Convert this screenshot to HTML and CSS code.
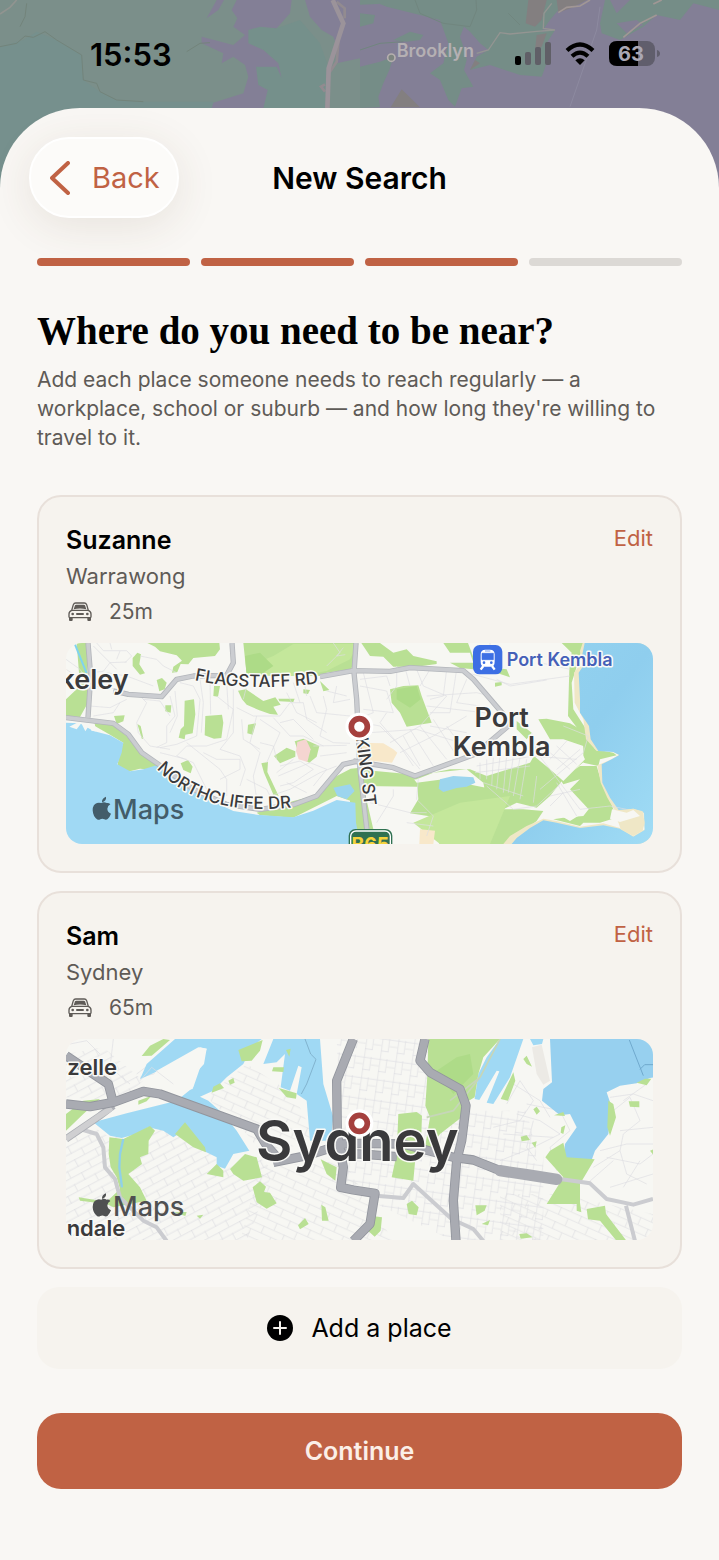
FILE: index.html
```html
<!DOCTYPE html>
<html lang="en">
<head>
  <meta charset="UTF-8" />
  <meta name="viewport" content="width=device-width, initial-scale=1.0"/>
  <title>New Search</title>
  <link rel="stylesheet" href="styles.css">
</head>

<body>
  <!-- dimmed map behind the sheet -->
  <svg class="backdrop" viewBox="0 0 2157 624" preserveAspectRatio="xMidYMin slice" aria-hidden="true">
    <rect width="2157" height="624" fill="#7b8f8a"/>
    <path d="M0 140 70 120 110 95 170 120 245 165 250 240 300 275 350 300 430 305 H640 V624H0Z" fill="#76908d"/>
    <path d="M745 90 780 80 830 85 900 60 960 130 985 200 975 324H790L803 270 775 255 768 200 830 200 845 235 835 190 790 150 745 130Z" fill="#75908b"/>
    <path class="bay" d="M650 0 620 55 655 30 672 0ZM710 0 695 30 712 55 700 80 735 105 700 135 605 110 605 130 670 160 665 190 700 170 735 195 745 230 730 280 640 308 635 325H790L803 270 775 255 768 200 830 200 845 235 835 190 790 150 745 130 745 90 780 80 830 85 870 40 875 0ZM915 0 930 50 965 90 1000 110 1015 150 1010 190 1080 175V0Z"/>
    <g transform="translate(1080)">
      <path class="bay" d="M0 0H1077V624H800V324H0Z"/>
      <path class="hills" d="M0 0H70L55 12 0 14ZM0 40 45 45 40 70 0 80ZM80 20 30 0H620L570 60 545 95 585 90 560 130 560 190 545 230 480 225 390 195 330 210 350 170 385 150 360 130 330 95 312 80 300 110 310 140 320 180 312 210 340 260 305 265 285 320 265 300 240 240 210 220 250 190 265 130 240 60 180 45ZM100 120 150 95 190 105 180 120 140 125ZM0 200 60 185 100 170 88 210 70 250 55 290 60 322 0 324Z"/>
      <path class="hills" d="M735 0 720 70 725 100 780 120 850 80 890 45 960 60 1000 10 1077 30V0Z"/>
      <path d="M750 0 770 40 810 0ZM770 70 830 60 850 75 800 100Z" fill="#837f95"/>
      <path d="M505 0H560L545 60 525 80 497 70ZM92 322 125 268 180 322ZM590 0H680L640 22 595 38ZM530 105 560 100 545 140 525 150ZM330 210 345 180 360 190Z" fill="#837f80"/>
      <path d="M595 38 620 22 660 18 690 0M790 112 840 70 890 45M880 12 905 0" fill="none" stroke="#a19795" stroke-width="5"/>
      <path d="M350 160 385 150 420 98 450 102 530 94 585 90 550 85 552 40 575 10" fill="none" stroke="#949592" stroke-width="4"/>
      <path d="M165 0 180 40 250 70 330 80 350 30 348 0M445 40 480 75M0 150 60 130 130 125" fill="none" stroke="#71867f" stroke-width="3"/>
      <path d="M720 20 710 90 630 320" fill="none" stroke="#8d8aa0" stroke-width="3"/>
      <circle cx="94" cy="173" r="11" fill="#7d8580" stroke="#b5afae" stroke-width="5"/>
      <text class="town" x="110" y="172">Brooklyn</text>
    </g>
    <path d="M0 140 50 130 75 108 100 112 135 95 170 120 245 165 250 240 290 250 300 275 350 300 430 305M60 80 75 50 80 10M560 155 600 130 630 128" fill="none" stroke="#73847b" stroke-width="3"/>
    <path d="M0 42 30 22 50 0" fill="none" stroke="#919490" stroke-width="5"/>
    <path d="M975 275 963 260 975 253M1010 5 1034 25 1034 55M1016 120 1010 185 990 215" fill="none" stroke="#928b90" stroke-width="8"/>
    <path d="M998 0 1030 70 986 205 982 330" fill="none" stroke="#9b939a" stroke-width="14"/>
  </svg>

  <header class="status">
    <span class="time">15:53</span>
    <div class="status-icons">
      <svg width="36" height="24" viewBox="0 0 36 24" aria-label="Signal">
        <rect x="0" y="14" width="6" height="9" rx="2"/>
        <g fill="#605f67"><rect x="10" y="10" width="6" height="13" rx="2"/><rect x="20" y="5" width="6" height="18" rx="2"/><rect x="30" y="0" width="6" height="23" rx="2"/></g>
      </svg>
      <svg width="30" height="24" viewBox="0 0 30 24" aria-label="Wi-Fi">
        <path d="M2 8.500Q15-3.500 28 8.500M7 14.300Q15 7 23 14.300" fill="none" stroke="#000" stroke-width="4.200"/>
        <path d="M15 23 10.300 18.300Q15 14 19.700 18.300Z"/>
      </svg>
      <svg width="51" height="26" viewBox="0 0 51 26" aria-label="Battery">
        <rect x="0" y="0" width="46" height="25" rx="8" fill="#605e6c"/>
        <path d="M8 0H29V25H8Q0 25 0 17V8Q0 0 8 0Z"/>
        <path d="M48 9Q51 10 51 12.500T48 16Z" fill="#605e6c"/>
        <text class="charge" x="22" y="20">63</text>
      </svg>
    </div>
  </header>

  <main class="sheet">
    <div class="nav">
      <button class="back" type="button">
        <svg width="20" height="34" viewBox="0 0 20 34" aria-hidden="true"><path d="M18 2 2 17 18 32" fill="none" stroke="currentColor" stroke-width="4" stroke-linecap="round" stroke-linejoin="round"/></svg>
        Back
      </button>
      <h1>New Search</h1>
    </div>

    <div class="progress" role="progressbar" aria-valuenow="3" aria-valuemin="0" aria-valuemax="4" aria-label="Step">
      <span class="step done"></span>
      <span class="step done"></span>
      <span class="step done"></span>
      <span class="step"></span>
    </div>

    <h2>Where do you need to be near?</h2>
    <p class="intro">Add each place someone needs to reach regularly — a workplace, school or suburb — and how long they're willing to travel to it.</p>

    <section class="card">
      <div class="card-top">
        <h3>Suzanne</h3>
        <button class="edit" type="button">Edit</button>
      </div>
      <p class="place">Warrawong</p>
      <p class="travel">
        <svg class="car" viewBox="0 0 72 58" aria-label="By car"><use href="#car"/></svg>
        25m
      </p>

      <!-- Warrawong map -->
      <svg class="map" viewBox="18 21 1761 603" role="img" aria-label="Map of Warrawong">
        <defs>
          <g id="car">
            <path d="M11 25 16 8Q18 3 23 3H49Q54 3 56 8L61 25M11 25Q3 28 3 36V44Q3 47 7 47H65Q69 47 69 44V36Q69 28 61 25Z" fill="none" stroke="#5f5b57" stroke-width="4"/>
            <path d="M17 22 21 10Q22 8 25 8H47Q50 8 51 10L55 22Q36 17 17 22ZM3 46H14V54Q14 57 11 57H6Q3 57 3 54ZM58 46H69V54Q69 57 66 57H61Q58 57 58 54ZM27 33H45Q48 33 48 36T45 39H27Q24 39 24 36T27 33Z" fill="#5f5b57"/>
            <circle cx="14" cy="36" r="4" fill="#5f5b57"/><circle cx="58" cy="36" r="4" fill="#5f5b57"/>
          </g>
          <g id="pin">
            <circle r="42" fill="#fff"/>
            <circle r="24" fill="#fff" stroke="#a5403e" stroke-width="17"/>
          </g>
          <g id="apple">
            <path d="M42 16Q34 11 26 16 18 14 13 16 0 20 0 38 1 56 13 65 18 68 23 65 29 62 35 65 40 68 45 64 52 57 55 48 44 43 44 33 45 24 53 20 49 15 42 16ZM28 14Q27 2 40-3 42 10 28 14Z"/>
            <text class="maps-word" x="61" y="64">Maps</text>
          </g>
          <linearGradient id="sea" x1="0" y1="0" x2="1" y2="1"><stop offset="0" stop-color="#94d3ef"/><stop offset=".5" stop-color="#8fceee"/><stop offset="1" stop-color="#a0dcf5"/></linearGradient>
        </defs>

        <rect x="18" y="21" width="1761" height="603" fill="#f7f7f3"/>
        <g class="park">
          <path d="M50 21H85L82 120 84 200 60 243 18 240V190L60 150Z"/>
          <path d="M262 21H478L480 40 465 60 400 66 385 85 362 84 352 108 336 110 340 92 366 74 350 58 300 46 285 32Z"/>
          <path d="M550 21H895L885 80 872 100 800 110 780 120 560 118Z"/>
          <path d="M232 50 243 55 238 85 255 112 240 116 218 90 218 66ZM290 132 306 126 320 140 314 160 298 166ZM374 194 402 190 406 235 398 292 376 296 374 310 356 305 362 280 372 270ZM436 240 486 236 490 260 484 306 462 308 434 298ZM534 164 558 160 610 195 646 184 662 206 640 212 654 236 630 234 596 222 560 206 546 190ZM564 266 588 262 578 296 562 292ZM316 208 334 208 332 230 316 226ZM162 240 194 238 190 256 170 264ZM462 150 480 150 474 182 460 180ZM232 264 242 270 250 306 246 310ZM642 360 680 335 706 346 706 362 660 382ZM704 316 730 308 778 330 770 362 748 380 720 366ZM362 382 384 372 398 392 392 412 370 402ZM604 382 624 378 622 408 656 480 646 490 612 410ZM730 160 750 162 744 174 730 172ZM780 135 808 162 790 166ZM655 188 704 188 700 198 658 196Z"/>
          <path d="M90 262 150 262 200 300 260 365 300 385 285 402 240 398 200 408 172 395 178 350 190 320 150 296Z"/>
          <path d="M590 530 700 495 770 478 830 420 872 398 900 395 920 450 900 624 888 624 888 500 830 480 700 545 600 538Z"/>
        </g>
        <g class="park" transform="translate(870)">
          <path d="M34 21 60 60 100 62 130 92 200 92 260 84 260 76 190 60 170 40 130 50 90 21ZM280 21 300 50 360 50 370 80 300 80 330 96 420 104 480 124 470 100 380 90 354 21ZM120 160 160 150 205 148 215 180 245 260 170 272 150 230 125 200ZM565 250 590 248 660 262 700 285 715 320 720 360 690 380 640 430 600 480 560 515 500 500 460 520 410 490 400 440 350 400 250 410 200 430 60 450 0 440V400L120 410 200 420 300 400 360 400 410 420 540 380 552 360 600 400 640 430 710 370 700 330 640 310 600 310ZM435 140 455 138 455 148 435 152ZM500 255 545 290 530 310 500 280ZM20 400 180 415 200 440 280 430 430 460 430 520 520 520 580 525 560 555 500 600 480 624H268V545L180 532 205 490 202 452 40 450 70 580 40 624H0V440Z"/>
          <path d="M690 390 740 390 755 440 780 490 798 545 750 560 700 560 690 570 610 550 640 545 700 540 716 520 660 460 690 430 640 445 630 430ZM635 21H700L690 60 665 140 670 220 715 290 735 340 790 350 800 358 750 370 745 390 700 380 700 300 654 240 658 100 665 50ZM60 21 78 21 66 38Z"/>
        </g>
        <path d="M700 24H895L870 70 800 105 720 120 600 118 590 80 640 60ZM1060 560 1200 500 1350 480 1290 624 1140 624Z" fill="#c4e79b"/>
        <path d="M555 60 600 50 640 90 600 118H560ZM1010 160 1070 150 1082 190 1050 215 1010 190Z" fill="#addb87"/>
        <path d="M712 318 738 310 752 340 742 378 716 370 708 345Z" fill="#f5d5d1"/>
        <path d="M900 320 970 322 1000 340 1012 350 996 380 890 370ZM1080 580 1125 584 1120 624 1078 624Z" fill="#f8e8ca"/>
        <path d="M1140 430 1180 420 1240 424 1246 440 1220 452 1190 456 1150 468 1136 458ZM820 455 870 445 884 465 860 490 832 480Z" fill="#9cd5ee"/>

        <path class="water" d="M18 260 60 262 100 285 150 298 190 320 185 350 172 385 210 406 250 400 290 388 340 420 390 462 450 492 520 525 590 536 700 544 760 524 830 492 886 500 888 560 900 624H18Z"/>
        <path d="M28 272 50 280 64 262 76 286 90 264 94 284 108 286 104 262 60 256Z" fill="#f7f7f3"/>
        <g transform="translate(870)">
          <path d="M698 21 690 45 694 80 672 110 674 200 700 250 708 310 740 345 785 346 806 357 780 372 742 388 752 440 772 485 798 530 850 520 880 530 884 580 850 600 810 576 760 562 690 572 620 555 580 548 530 570 480 600 460 624 H900V21Z" fill="#efe7c6"/>
          <path d="M704 21 696 60 698 92 686 110 690 190 690 230 717 270 722 310 745 345 790 348 808 357 785 370 755 385 757 440 780 485 806 522 850 518 882 530 884 582 850 602 810 578 760 568 690 576 620 560 580 553 540 576 500 606 485 624 H912 V21Z" fill="url(#sea)"/>
          <path d="M790 528 850 518 878 526 884 560 878 584 850 600 812 580 806 562Z" fill="#efe7c6"/>
          <path d="M786 520 830 530 850 522 870 540 810 558 780 548Z" fill="#f7f7f3"/>
          <path d="M600 400 650 320 690 340 705 370 640 435ZM580 510 630 450 700 530 660 555Z" fill="#f7f7f3"/>
        </g>
        <path d="M45 25 80 112" stroke="#80d3ee" stroke-width="6" fill="none"/>

        <!-- minor streets -->
        <path class="street" d="M100 30 130 60 170 100M90 110 130 106 150 80 200 78M110 21 130 44 200 44 215 60 195 80M150 21 155 40M180 45 170 70M240 60 290 70 310 90 350 110M100 150 180 160 240 180 260 200 230 260 235 290 270 330 330 340M250 190 300 195 330 240M90 210 150 215 200 190M100 240 160 230 180 200M330 180 345 240 320 270 320 320 290 334M345 165 352 240 330 290M360 140 400 150 420 190 410 300 350 325 300 335M420 130 430 200 424 290M450 130 452 235M470 180 520 220 500 310 440 330 380 330 350 360M500 140 505 220M520 160 520 290 480 340 540 360 556 400 540 450M530 215 580 240 660 240 690 200M545 250 550 310 600 340M590 240 570 320 600 350 580 420 590 490M600 250 660 290 620 380M640 245 690 300 730 300 790 330M660 260 700 250 760 310M690 200 730 200 740 250 800 290M680 170 710 230 770 260M750 180 770 230 870 240M790 180 800 220 780 300 820 320 870 322M830 150 820 200 870 190M800 165 860 180M700 140 720 200M760 330 860 328M780 360 860 350M380 320 480 400 500 430 500 480M350 360 400 380 440 460M430 350 470 370 540 370 540 400 480 430M300 350 380 370M660 390 720 375 760 400 700 440 660 450M650 410 700 370M655 420 750 380 800 400 760 450M680 440 740 470M630 480 690 460 780 410 830 390M560 430 620 460 640 500M600 320 640 330 650 370M140 110 200 120 280 150M18 70 60 100 80 130M18 100 50 120M560 150 550 190M730 120 740 180M820 21 840 50 800 90M850 35 830 60 856 56"/>
        <g class="street" transform="translate(870)">
          <path d="M30 130 110 120 120 150M40 110 70 230 20 250M30 150 110 165 130 230 40 220M35 260 90 270 160 340 210 400M110 230 90 260 150 330 190 390M140 90 140 150 110 190M165 95 180 150M200 100 220 150 290 180M240 100 210 150M290 100 280 180 240 190M320 100 300 230 240 230M350 130 320 200 390 210M230 180 380 170 420 180M230 210 400 230 450 240M60 290 200 280 330 320M180 280 250 390M160 300 210 390M210 270 290 370M250 250 320 360M290 270 345 345M150 350 250 300 350 240M120 320 210 270 290 180M240 270 350 290M350 110 480 145 660 120M440 130 480 150 590 132M420 20 420 60M570 80 660 100M600 350 660 400M620 330 680 385M600 370 650 315M620 400 690 340M570 460 700 350 715 300 640 270M545 290 560 350 600 400 690 520 780 510 830 520M390 380 390 430M410 370 410 430M430 365 425 450M450 360 440 460M470 360 460 470M490 360 475 470M510 365 490 480M530 370 510 490M380 390 550 360M375 410 540 390M400 440 520 480M560 420 550 500M630 445 560 510 490 520 410 450M600 480 690 460M620 440 680 540M600 510 640 470M60 500 180 530 230 530M130 460 130 480 80 560M205 425 200 490 250 540 230 600M170 560 250 570M540 360 680 370"/>
        </g>

        <!-- main roads -->
        <g class="road-edge">
          <path d="M84 21 92 120 84 245"/><path d="M160 165 205 175 305 182 350 130 400 120 500 118 520 80 516 21"/><path d="M18 245 160 262 205 295 245 350 300 388 400 460 500 505 600 520 700 506 770 480 820 420 850 385 890 376"/><path d="M888 21 882 110 890 190 900 400 925 620"/><path d="M780 122 880 104 990 106 1050 95 1210 104 1240 130 1330 235 1345 270 1245 355 1065 420 1000 395 880 375"/>
        </g>
        <g class="road">
          <path d="M84 21 92 120 84 245"/><path d="M160 165 205 175 305 182 350 130 400 120 500 118 520 80 516 21"/><path d="M18 245 160 262 205 295 245 350 300 388 400 460 500 505 600 520 700 506 770 480 820 420 850 385 890 376"/><path d="M888 21 882 110 890 190 900 400 925 620"/><path d="M780 122 880 104 990 106 1050 95 1210 104 1240 130 1330 235 1345 270 1245 355 1065 420 1000 395 880 375"/>
        </g>

        <path id="flagstaff" d="M404 133Q590 172 820 136" fill="none"/>
        <path id="northcliffe" d="M290 398Q440 560 760 505" fill="none"/>
        <path id="king" d="M888 306Q904 420 918 550" fill="none"/>
        <text class="road-name"><textPath href="#flagstaff">FLAGSTAFF RD</textPath></text>
        <text class="road-name"><textPath href="#northcliffe">NORTHCLIFFE DR</textPath></text>
        <text class="road-name"><textPath href="#king">KING ST</textPath></text>
        <text class="suburb" x="206" y="158" text-anchor="end">keley</text>
        <text class="suburb" x="1325" y="272" text-anchor="middle">Port</text>
        <text class="suburb" x="1325" y="360" text-anchor="middle">Kembla</text>

        <rect x="1239" y="27" width="88" height="88" rx="20" fill="#3d6fe4"/>
        <path d="M1264 55Q1264 43 1276 43H1290Q1302 43 1302 55V77Q1302 90 1292 90H1274Q1264 90 1264 77Z" fill="#fff" stroke="#fff" stroke-width="4"/>
        <path d="M1266 52H1300V71H1266ZM1275 45H1291" fill="#3d6fe4" stroke="#3d6fe4" stroke-width="2"/>
        <path d="M1270 90 1262 101M1296 90 1304 101" stroke="#fff" stroke-width="7"/>
        <circle cx="1272" cy="80" r="4" fill="#3d6fe4"/><circle cx="1294" cy="80" r="4" fill="#3d6fe4"/>
        <text class="station" x="1340" y="91">Port Kembla</text>

        <rect x="866" y="579" width="131" height="90" rx="20" fill="#2f7151"/>
        <rect x="872" y="585" width="119" height="90" rx="16" fill="#2f7151" stroke="#fff" stroke-width="4"/>
        <text class="route" x="931" y="646">B65</text>
        <use href="#pin" x="898" y="272"/>
        <use class="maps-logo on-water" href="#apple" x="98" y="485"/>
      </svg>
    </section>

    <section class="card">
      <div class="card-top">
        <h3>Sam</h3>
        <button class="edit" type="button">Edit</button>
      </div>
      <p class="place">Sydney</p>
      <p class="travel">
        <svg class="car" viewBox="0 0 72 58" aria-label="By car"><use href="#car"/></svg>
        65m
      </p>

      <!-- Sydney map -->
      <svg class="map" viewBox="18 15 1761 603" role="img" aria-label="Map of Sydney">
        <defs>
          <pattern id="blocks-a" width="70" height="44" patternUnits="userSpaceOnUse" patternTransform="rotate(-28)"><path class="street" d="M0 2H70M2 0V26M36 22V44M0 24H70"/></pattern>
          <pattern id="blocks-b" width="48" height="62" patternUnits="userSpaceOnUse" patternTransform="rotate(8)"><path class="street" d="M2 0V62M22 0V40M0 4H48M0 40H24M24 24H48"/></pattern>
          <pattern id="blocks-c" width="66" height="46" patternUnits="userSpaceOnUse" patternTransform="rotate(24)"><path class="street" d="M0 2H66M2 0V24M34 24V46M0 24H66"/></pattern>
        </defs>
        <rect x="18" y="15" width="1761" height="606" fill="#f7f7f3"/>
        <path d="M18 310 100 280 150 310 250 290 380 280 490 400 600 370 640 410 560 621H18ZM18 60 130 40 250 140 180 200 18 190Z" fill="url(#blocks-a)"/>
        <path d="M830 15H1110L1100 110 1200 200V360H1450V621H1180L930 500 850 440ZM1220 230H1400L1440 400 1220 360Z" fill="url(#blocks-b)"/>
        <path d="M440 190 560 90 700 180 740 260 820 320 600 350 560 300ZM600 400 850 380 1000 621H540ZM1320 480 1500 480 1779 540V621H1320Z" fill="url(#blocks-c)"/>
        <path class="street" d="M1340 210 1380 140 1420 200 1380 260 1300 280M1360 150 1440 200 1470 250M1370 240 1440 260 1500 300 1420 340 1320 380M1400 210 1500 230 1530 290 1470 340 1490 410M1330 300 1480 310M1420 260 1400 340 1430 380M1650 190 1720 180 1779 200M1660 230 1710 190 1740 260 1690 300 1680 350M1620 350 1700 330 1779 330M1600 400 1680 350 1700 420 1760 450M1640 370 1740 390 1779 360M1690 200 1760 150M1580 450 1660 380M1680 290 1779 280M1650 460 1779 420M1740 380 1690 460M230 120 270 90 310 140M240 130 300 115 345 150 330 180M30 30 80 20 120 60M160 15 150 100 210 150"/>

        <path class="water" d="M345 15H605L575 40 550 90 500 130 460 170 420 188 445 200 490 240 530 290 568 350 520 360 495 404 470 395 470 370 430 350 380 285 340 310 310 290 265 280 230 300 185 312 150 305 100 265 200 238 350 200 400 160 440 44 420 40 350 95 300 108 240 136 260 90Z"/>
        <path class="water" d="M640 15 610 90 650 85 675 60 662 160 690 170 715 95 725 100 710 180 740 200 750 320 812 320 820 250 790 150 780 15Z"/>
        <path d="M415 40 440 44 432 90 405 120 398 165 310 185 250 165 290 110Z" fill="#f7f7f3"/>
        <path class="street" d="M240 140 275 100 340 150"/>
        <path d="M735 15 752 60 768 76 740 150 724 180" fill="none" stroke="#82b3ce" stroke-width="3"/>
        <g transform="translate(870)">
          <path class="water" d="M450 15 410 70 385 120 374 195 388 198 440 110 448 112 410 206 430 210 480 130 520 15ZM540 15H580L576 30 550 34ZM315 15H370L358 26 330 55 315 42Z"/>
          <path d="M600 15H912V130L900 132 860 148 810 155 770 175 785 220 775 300 735 350 725 378 640 372 645 330 680 280 660 240 630 244 576 200 580 165 606 145Z" fill="#97d0ef"/>
          <path d="M546 40 575 32 600 140 580 152 560 120Z" fill="#eceae5"/>
          <path d="M838 18 880 125M870 106 884 92 912 92" stroke="#70a9cd" stroke-width="3" fill="none"/>
        </g>

        <g class="park">
          <path d="M270 35 310 15 330 18 275 65 245 66ZM535 48 608 18 600 50 575 80 545 82ZM460 158 480 148 492 162 455 176ZM505 140 520 132 524 146 510 152ZM640 100 672 100 670 114 636 112ZM18 240 70 200 120 195 70 240 18 290ZM235 200 275 185 260 202 235 212ZM656 162 710 178 708 194 680 190ZM678 48 692 44 688 68Z"/>
          <path d="M148 310 190 315 270 276 285 290 266 320 265 360 240 370 246 390 205 420 240 460 260 500 160 520 140 510 60 500 56 490 140 503 180 465 170 430 152 400 146 360ZM345 300 375 265 435 340 438 355 400 340ZM440 420 470 390 490 410 490 430ZM510 405 555 360 590 370 606 430 550 440 520 420ZM578 460 600 442 618 458 612 474 630 476 650 508 620 524 590 505ZM782 376 830 400 826 440 800 420ZM714 574 735 552 746 570 720 586ZM784 512 796 520 806 560 786 560ZM410 545 430 542 420 554ZM340 535 380 534 376 546Z"/>
        </g>
        <g class="park" transform="translate(870)">
          <path d="M235 15H450L400 70 385 120 374 190 340 210 335 250 270 300 240 340 225 340 240 250 226 215 232 125ZM145 240 200 234 216 245 214 300 200 330 190 440 125 430 140 360ZM520 75 530 65 546 98 530 90ZM490 115 496 140 474 200 452 195ZM586 370 600 350 640 326 650 370 734 376 690 450 690 506 694 535 680 530 680 510 590 510 640 430ZM550 226 560 218 570 232 560 242ZM512 308 530 304 540 318 515 322ZM545 326 560 322 556 342ZM612 244 640 234 645 246ZM634 280 646 274 640 300 632 296ZM775 200 790 210 798 250 780 305 772 280ZM860 146 885 134 904 134 890 154ZM836 202 868 202 868 220 840 218ZM710 525 765 515 768 540 830 621H800L750 560 714 556ZM170 510 186 500 206 520 200 544 176 540ZM376 514 410 514 404 530 380 544ZM60 545 96 550 92 590 74 608 54 590ZM508 600 530 598 548 610 512 614ZM395 570 420 558 414 574ZM900 350 912 345 912 365Z"/>
        </g>
        <path d="M1130 110 1190 70 1230 60 1240 120 1180 180Z" fill="#aedb88"/>
        <path d="M1260 130 1180 230 1100 250M1320 15 1260 130 1170 200" stroke="#c6d6b8" stroke-width="5" fill="none"/>
        <path d="M190 315 180 360 178 400 186 460" stroke="#8fd0e8" stroke-width="7" fill="none"/>

        <g class="lane">
          <path d="M60 285 110 300 130 340 135 400 165 435 180 490 250 560 290 580 320 621"/><path d="M948 485 1030 492 1060 450 1175 555 1240 585 1270 621"/><path d="M1500 435 1590 448 1640 495 1720 512 1779 495M1698 515 1725 621"/>
        </g>
        <path d="M18 315 120 245 160 215" stroke="#adafb5" stroke-width="22" fill="none"/>
        <path d="M18 315 120 245 155 222" stroke="#cfcfd1" stroke-width="17" fill="none"/>
        <g class="highway-edge">
          <path d="M18 210 90 218 160 205 250 172 300 180 590 285 620 335 660 380"/><path d="M18 65 100 120 145 150 158 200"/><path d="M640 385 740 365 850 330 900 328 1030 330 1180 370 1240 378 1320 410 1400 422 1490 436"/><path d="M880 15 830 140 832 300 850 400 842 460 880 468 945 478 930 570 880 621"/><path d="M1095 15 1080 80 1110 115 1200 165 1218 215 1205 320 1190 380 1180 500 1188 621"/><path d="M850 360 900 360 1010 368"/>
        </g>
        <g class="highway">
          <path d="M18 210 90 218 160 205 250 172 300 180 590 285 620 335 660 380"/><path d="M18 65 100 120 145 150 158 200"/><path d="M640 385 740 365 850 330 900 328 1030 330 1180 370 1240 378 1320 410 1400 422 1490 436"/><path d="M880 15 830 140 832 300 850 400 842 460 880 468 945 478 930 570 880 621"/><path d="M1095 15 1080 80 1110 115 1200 165 1218 215 1205 320 1190 380 1180 500 1188 621"/><path d="M850 360 900 360 1010 368"/>
        </g>
        <path d="M1320 410 1400 422 1490 436" fill="none" stroke="#a9abb2" stroke-width="34" stroke-linecap="round"/>

        <text class="city" x="892" y="380" text-anchor="middle">Sydney</text>
        <text class="suburb small" x="22" y="123">zelle</text>
        <text class="suburb small" x="20" y="606">ndale</text>
        <use href="#pin" x="898" y="268"/>
        <use class="maps-logo" href="#apple" x="98" y="481"/>
      </svg>
    </section>

    <button class="add" type="button">
      <svg width="26" height="26" viewBox="0 0 26 26" aria-hidden="true"><circle cx="13" cy="13" r="13"/><path d="M13 7V19M7 13H19" stroke="#f6f3ee" stroke-width="2" stroke-linecap="round"/></svg>
      Add a place
    </button>
    <button class="continue" type="button">Continue</button>
  </main>
</body>
</html>
```
FILE: styles.css
```css
* {
  box-sizing: border-box;
}

body {
  margin: 0;
  font-family: Inter, "Liberation Sans", sans-serif;
  color: #000;
  background: #f9f7f4;
}

h1, h2, h3, p {
  margin: 0;
}

button {
  border: 0;
  padding: 0;
  background: none;
  font-family: inherit;
  color: inherit;
  cursor: pointer;
}

.backdrop {
  position: absolute;
  top: 0;
  left: 0;
  width: 100%;
  height: 208px;
  z-index: -1;
}

.bay {
  fill: #837f96;
}

.hills {
  fill: #758d87;
}

.town {
  font-size: 54px;
  font-weight: 600;
  fill: #b5b0b3;
}

.status {
  display: flex;
  justify-content: space-between;
  align-items: center;
  height: 108px;
  padding: 0 59px 0 90px;
}

.time {
  font-size: 31px;
  font-weight: 600;
}

.status-icons {
  display: flex;
  align-items: center;
  gap: 14px;
}

.charge {
  font-size: 20px;
  font-weight: 700;
  text-anchor: middle;
  fill: #aaa8b4;
}

.sheet {
  display: flex;
  flex-direction: column;
  padding: 29px 37px 70px;
  border-radius: 80px 80px 0 0;
  background: #f9f7f4;
}

.nav {
  display: grid;
  grid-template-columns: 1fr auto 1fr;
  align-items: center;
  margin: 0 -8px 40px;
}

.back {
  justify-self: start;
  display: flex;
  align-items: center;
  gap: 22px;
  height: 81px;
  padding: 0 17px 0 19px;
  border: 2px solid #fff;
  border-radius: 40px;
  background: #fcfbf9;
  box-shadow: 0 8px 44px rgba(90, 60, 40, 0.11);
  color: #c06244;
  font-size: 29px;
}

h1 {
  font-size: 30px;
  font-weight: 600;
}

.progress {
  display: flex;
  gap: 11px;
  margin-bottom: 45px;
}

.step {
  flex: 1;
  height: 8px;
  border-radius: 4px;
  background: #dcd9d5;
}

.step.done {
  background: #c06244;
}

h2 {
  font-family: "Liberation Serif", serif;
  font-size: 39px;
  line-height: 40px;
  margin-bottom: 14px;
}

.intro {
  font-size: 21px;
  line-height: 29px;
  color: #5f5b57;
  margin-bottom: 43px;
}

.card {
  margin-bottom: 18px;
  padding: 27px;
  border: 2px solid #e8e0da;
  border-radius: 24px;
  background: #f6f3ee;
}

.card-top {
  display: flex;
  justify-content: space-between;
  align-items: center;
  height: 32px;
  margin-bottom: 6px;
}

h3 {
  font-size: 25px;
  font-weight: 600;
}

.edit {
  font-size: 22px;
  line-height: 28px;
  margin-bottom: 4px;
  color: #c06244;
}

.place {
  font-size: 22px;
  line-height: 28px;
  margin-bottom: 8px;
  color: #5f5b57;
}

.travel {
  display: flex;
  align-items: center;
  gap: 17px;
  padding-left: 2px;
  font-size: 21px;
  line-height: 28px;
  margin-bottom: 17px;
  color: #5f5b57;
}

.car {
  width: 24px;
}

.map {
  display: block;
  width: 100%;
  border-radius: 16px;
}

.water {
  fill: #a0d9f4;
}

.park {
  fill: #b9e094;
}

.street {
  fill: none;
  stroke: #dedee2;
  stroke-width: 2px;
}

.road-edge, .road, .highway-edge, .highway, .lane {
  fill: none;
  stroke-linejoin: round;
}

.road-edge {
  stroke: #b3b6bb;
  stroke-width: 16px;
}

.road {
  stroke: #cbcdd1;
  stroke-width: 11px;
}

.lane {
  stroke: #cbccd0;
  stroke-width: 12px;
}

.highway-edge {
  stroke: #92959d;
  stroke-width: 28px;
}

.highway {
  stroke: #a9abb2;
  stroke-width: 23px;
}

.road-name, .suburb, .city, .station {
  stroke: #fafaf7;
  stroke-width: 9px;
  stroke-linejoin: round;
  paint-order: stroke;
  fill: #3a3a3c;
}

.road-name {
  font-size: 51px;
  font-weight: 500;
}

.suburb {
  font-size: 81px;
  font-weight: 600;
}

.suburb.small {
  font-size: 66px;
}

.city {
  font-size: 168px;
  font-weight: 600;
}

.station {
  font-size: 54px;
  font-weight: 600;
  fill: #4560b8;
}

.route {
  font-size: 58px;
  font-weight: 700;
  text-anchor: middle;
  fill: #f5d33c;
}

.maps-logo {
  fill: #4f5051;
}

.maps-logo.on-water {
  fill: #435d6a;
}

.maps-word {
  font-size: 81px;
  font-weight: 500;
}

.add {
  display: flex;
  justify-content: center;
  align-items: center;
  gap: 18px;
  height: 82px;
  margin-bottom: 44px;
  border-radius: 22px;
  background: #f6f3ee;
  font-size: 25px;
}

.continue {
  height: 76px;
  border-radius: 24px;
  background: #c06244;
  color: #fbefe8;
  font-size: 25px;
  font-weight: 600;
}
```
